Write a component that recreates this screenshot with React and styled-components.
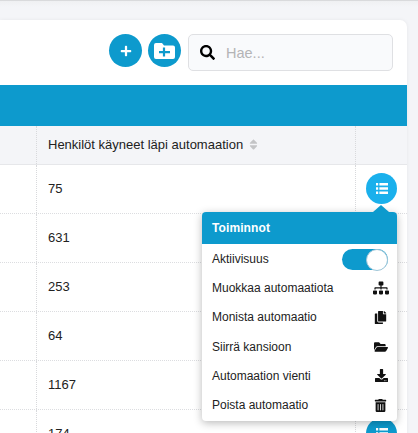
import React from "react";
import styled, { createGlobalStyle } from "styled-components";
import { FaPlus, FaSearch, FaSitemap, FaCopy, FaFolderOpen, FaDownload, FaTrashAlt, FaSort } from "react-icons/fa";

const Global = createGlobalStyle`
  html, body { margin: 0; padding: 0; background: #f4f5f8; overflow: hidden; }
  body { font-family: "Liberation Sans", Arial, sans-serif; color: #222; }
`;
const Page = styled.div`
  width: 418px; height: 433px; overflow: hidden; box-sizing: border-box;
  padding-top: 19px; border-top: 1px solid #d9dadc; position: relative;
  background: linear-gradient(#eff0f2 0, #f4f5f8 6px);
`;
const Card = styled.div`
  width: 407px; background: #fff; border-radius: 0 7px 0 0; box-shadow: 0 0 4px rgba(0,0,0,.06);
  position: relative;
`;
const Toolbar = styled.div`
  height: 65px; box-sizing: border-box; padding: 14px 14px 0 0;
  display: flex; justify-content: flex-end; gap: 6px;
`;
const Round = styled.button`
  width: 33px; height: 33px; border-radius: 50%; border: 0; padding: 0; background: #0d9acd; color: #fff;
  display: flex; align-items: center; justify-content: center; font-size: ${p => p.$size}px;
`;
const Search = styled.div`
  width: 205px; height: 37px; box-sizing: border-box; margin-left: 1px; background: #f9fafc;
  border: 1px solid #dfe0e3; border-radius: 5px; display: flex; align-items: center; padding-left: 11px; gap: 11px;
  font-size: 14.5px; color: #b4b4b6;
  svg { color: #000; font-size: 15px; }
`;
const Band = styled.div`height: 41px; background: #0d9acd;`;
const Row = styled.div`
  display: grid; grid-template-columns: 36px 319px 52px; height: ${p => p.$head ? 39 : 49}px;
  box-sizing: border-box; background: ${p => p.$head ? "#f4f5f8" : "#fff"};
  border-bottom: 1px ${p => p.$head ? "solid #e6e7ea" : "dotted #dcdde0"};
`;
const Cell = styled.div`
  border-left: ${p => p.$first ? "0" : "1px dotted #d8d9dc"};
  display: flex; align-items: center; box-sizing: border-box;
  padding: 0 0 2px ${p => p.$first ? 0 : 11}px; font-size: 13px; color: #222; gap: 4px;
`;
const Sort = styled.span`color: #c3c4c6; font-size: 13px; display: flex;`;
const ActionCell = styled(Cell)`padding: 0 0 2px 10px;`;
const ListBtn = styled.div`
  width: 31px; height: 31px; border-radius: 50%; background: ${p => p.$open ? "#1ab0ec" : "#0d9acd"}; color: #fff;
  display: flex; align-items: center; justify-content: center; flex: none;
`;
const Menu = styled.div`
  position: absolute; left: 202px; top: 192px; width: 195px; height: 209px; background: #fff; border-radius: 4px;
  box-shadow: 0 2px 8px rgba(0,0,0,.28); z-index: 2;
  &::before {
    content: ""; position: absolute; right: 8px; top: -7px; width: 0; height: 0;
    border-left: 8px solid transparent; border-right: 8px solid transparent; border-bottom: 7px solid #0d9acd;
  }
`;
const MenuHead = styled.div`
  height: 32px; background: #0d9acd; color: #fff; font-size: 12px; font-weight: 700; border-radius: 4px 4px 0 0;
  display: flex; align-items: center; padding-left: 10px; letter-spacing: .1px;
`;
const MenuList = styled.div`padding: .5px 8px 0 10px;`;
const Item = styled.div`
  height: 29.2px; display: flex; align-items: center; justify-content: space-between; font-size: 12px; color: #222;
  svg { font-size: ${p => p.$size || 14}px; color: #111; margin-right: ${p => p.$mr ?? 1}px; }
`;
const Toggle = styled.div`
  width: 46px; height: 21px; border-radius: 11px; background: #0d9acd; position: relative; margin: 1px 1px 0 0;
  &::after {
    content: ""; position: absolute; right: 0; top: 0; width: 20px; height: 20px; border-radius: 50%;
    background: #fff; border: .5px solid #9fc6d8;
  }
`;

const FolderPlus = () => (
  <svg width="21" height="16" viewBox="0 0 21 16" aria-hidden="true">
    <path d="M2 0h6l2 2.4h9a2 2 0 0 1 2 2V14a2 2 0 0 1-2 2H2a2 2 0 0 1-2-2V2a2 2 0 0 1 2-2z" fill="#fff" />
    <path d="M10 4.6v9M5 9.1h11" stroke="#0d9acd" strokeWidth="2.2" fill="none" />
  </svg>
);
const ListIcon = () => (
  <svg width="12" height="11" viewBox="0 0 12 11" fill="#fff" aria-hidden="true">
    <path d="M0 0h2.2v2.4H0zM3.4 0H12v2.4H3.4zM0 4.3h2.2v2.4H0zM3.4 4.3H12v2.4H3.4zM0 8.6h2.2V11H0zM3.4 8.6H12V11H3.4z" />
  </svg>
);

const values = ["75", "631", "253", "64", "1167", "174"];
const items = [
  ["Muokkaa automaatiota", FaSitemap, 16, 0],
  ["Monista automaatio", FaCopy, 13, 2],
  ["Siirrä kansioon", FaFolderOpen, 14, 1],
  ["Automaation vienti", FaDownload, 13, 1],
  ["Poista automaatio", FaTrashAlt, 13, 2],
];

export default function App() {
  return (
    <Page>
      <Global />
      <Card>
        <Toolbar>
          <Round $size={12}><FaPlus /></Round>
          <Round><FolderPlus /></Round>
          <Search><FaSearch /><span>Hae...</span></Search>
        </Toolbar>
        <Band />
        <Row $head>
          <Cell $first />
          <Cell>Henkilöt käyneet läpi automaation <Sort><FaSort /></Sort></Cell>
          <Cell />
        </Row>
        {values.map((v, i) => (
          <Row key={v}>
            <Cell $first />
            <Cell>{v}</Cell>
            <ActionCell><ListBtn $open={i === 0}><ListIcon /></ListBtn></ActionCell>
          </Row>
        ))}
        <Menu>
          <MenuHead>Toiminnot</MenuHead>
          <MenuList>
            <Item><span>Aktiivisuus</span><Toggle /></Item>
            {items.map(([label, Icon, size, mr]) => (
              <Item key={label} $size={size} $mr={mr}><span>{label}</span><Icon /></Item>
            ))}
          </MenuList>
        </Menu>
      </Card>
    </Page>
  );
}
